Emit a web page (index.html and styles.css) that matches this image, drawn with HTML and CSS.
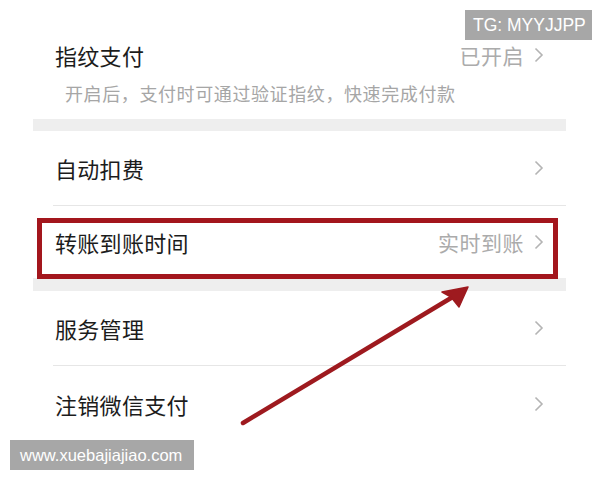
FILE: index.html
```html
<!DOCTYPE html>
<html lang="zh">
<head>
<meta charset="utf-8">
<title>支付设置</title>
<link rel="stylesheet" href="styles.css">
</head>
<body>
<div class="page">
  <div class="panel">
    <div class="row row-first">
      <div class="row-main">
        <span class="title">指纹支付</span>
        <span class="meta">已开启<svg class="chev" viewBox="0 0 10 16"><path d="M1.5 1.5 L8 8 L1.5 14.5"/></svg></span>
      </div>
      <div class="sub">开启后，支付时可通过验证指纹，快速完成付款</div>
    </div>
    <div class="gap"></div>
    <div class="row row-a">
      <div class="row-main">
        <span class="title">自动扣费</span>
        <span class="meta"><svg class="chev" viewBox="0 0 10 16"><path d="M1.5 1.5 L8 8 L1.5 14.5"/></svg></span>
      </div>
    </div>
    <div class="divider"></div>
    <div class="row row-b highlight">
      <div class="row-main">
        <span class="title">转账到账时间</span>
        <span class="meta">实时到账<svg class="chev" viewBox="0 0 10 16"><path d="M1.5 1.5 L8 8 L1.5 14.5"/></svg></span>
      </div>
    </div>
    <div class="gap gap2"></div>
    <div class="row row-c">
      <div class="row-main">
        <span class="title">服务管理</span>
        <span class="meta"><svg class="chev" viewBox="0 0 10 16"><path d="M1.5 1.5 L8 8 L1.5 14.5"/></svg></span>
      </div>
    </div>
    <div class="divider"></div>
    <div class="row row-d">
      <div class="row-main">
        <span class="title">注销微信支付</span>
        <span class="meta"><svg class="chev" viewBox="0 0 10 16"><path d="M1.5 1.5 L8 8 L1.5 14.5"/></svg></span>
      </div>
    </div>
  </div>

  <svg class="arrow" viewBox="0 0 600 480" width="600" height="480">
    <line x1="243" y1="423" x2="456" y2="295" />
    <path class="head" d="M468 287 L442 292 L451 297 L459 307 Z"/>
  </svg>

  <div class="wm wm-tg">TG: MYYJJPP</div>
  <div class="wm wm-site">www.xuebajiajiao.com</div>
</div>
</body>
</html>
```
FILE: styles.css
```css
* { box-sizing: border-box; }
html, body {
  margin: 0;
  padding: 0;
  background: #ffffff;
}
.page {
  position: relative;
  width: 600px;
  height: 480px;
  overflow: hidden;
  font-family: "Noto Sans CJK SC", "Noto Sans", sans-serif;
}
.panel {
  margin-left: 33px;
  width: 533px;
  display: flex;
  flex-direction: column;
}
.row {
  position: relative;
  display: flex;
  flex-direction: column;
  justify-content: center;
  padding: 0 22px;
  background: #fff;
}
.row-first {
  padding-top: 40px;
  height: 119px;
  justify-content: flex-start;
}
.row-a { height: 74px; }
.row-b { height: 72px; }
.row-c { height: 74px; }
.row-d { height: 76px; }
.row-main {
  display: flex;
  align-items: center;
  justify-content: space-between;
  height: 30px;
}
.title {
  font-size: 22px;
  color: #1c1c1c;
  letter-spacing: 0.3px;
}
.meta {
  display: flex;
  align-items: center;
  font-size: 21px;
  color: #ababab;
  letter-spacing: 0.5px;
}
.chev {
  width: 10px;
  height: 16px;
  margin-left: 10px;
  fill: none;
  stroke: #b4b4b4;
  stroke-width: 1.6;
}
.sub {
  margin-top: 11px;
  margin-left: 10px;
  font-size: 18px;
  line-height: 24px;
  color: #a6a6a6;
  letter-spacing: 0.6px;
}
.gap {
  height: 12px;
  background: #eeeeee;
}
.gap2 { height: 13px; }
.divider {
  height: 1px;
  margin-left: 20px;
  background: #e6e6e6;
}
.highlight::after {
  content: "";
  position: absolute;
  left: 4px;
  right: 8px;
  top: 12px;
  bottom: -1px;
  border: 5px solid #a3161d;
  pointer-events: none;
}
.arrow {
  position: absolute;
  left: 0;
  top: 0;
}
.arrow line {
  stroke: #9e1a1f;
  stroke-width: 4.5;
  stroke-linecap: round;
}
.arrow .head {
  fill: #9e1a1f;
  stroke: #9e1a1f;
  stroke-width: 1.5;
  stroke-linejoin: round;
}
.wm {
  position: absolute;
  background: #a7a7a7;
  color: #ffffff;
  font-family: "Liberation Sans", Arial, sans-serif;
  height: 30px;
  line-height: 30px;
  white-space: nowrap;
}
.wm-tg {
  left: 465px;
  top: 10px;
  width: 127px;
  padding-left: 8px;
  font-size: 17.5px;
}
.wm-site {
  left: 10px;
  top: 440px;
  width: 184px;
  padding-left: 10px;
  font-size: 16.5px;
}
```
